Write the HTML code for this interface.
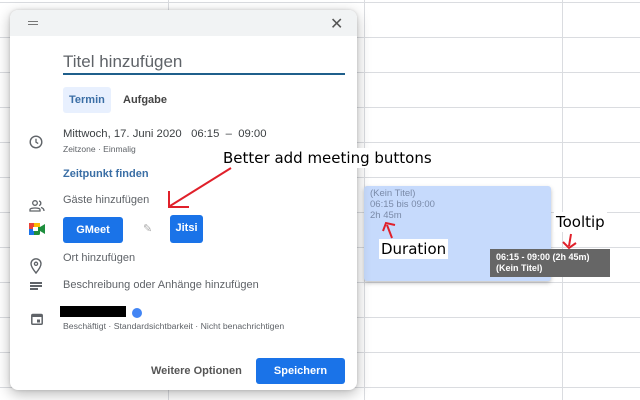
<!DOCTYPE html>
<html><head><meta charset="utf-8"><style>
*{margin:0;padding:0;box-sizing:border-box}
body{width:640px;height:400px;overflow:hidden;background:#fff;font-family:"Liberation Sans",Arial,sans-serif;position:relative}
.h{position:absolute;left:0;width:640px;height:1px;background:#dadce0}
.v{position:absolute;top:0;height:400px;width:1px;background:#dadce0}
.abs{position:absolute}
.dlg{position:absolute;left:10px;top:10px;width:347px;height:380px;background:#fff;border-radius:8px;box-shadow:0 4px 14px rgba(0,0,0,.28),0 0 3px rgba(0,0,0,.15);overflow:hidden}
.t{position:absolute;white-space:nowrap;color:#3c4043;font-size:11px}
.g{color:#5f6368}
.btn{position:absolute;background:#1a73e8;color:#fff;font-weight:bold;font-size:11px;border-radius:3px;text-align:center}
.ann{position:absolute;background:#fff;font-family:"DejaVu Sans",sans-serif;color:#000;white-space:nowrap}
</style></head><body>
<div class="h" style="top:2px"></div><div class="h" style="top:37px"></div><div class="h" style="top:72px"></div><div class="h" style="top:107px"></div><div class="h" style="top:142px"></div><div class="h" style="top:177px"></div><div class="h" style="top:212px"></div><div class="h" style="top:247px"></div><div class="h" style="top:282px"></div><div class="h" style="top:317px"></div><div class="h" style="top:352px"></div><div class="h" style="top:387px"></div>
<div class="v" style="left:168px"></div><div class="v" style="left:364px"></div><div class="v" style="left:562px"></div>

<div class="abs" style="left:364px;top:186px;width:187px;height:95px;background:#c6dafc;border-radius:3px;box-shadow:0 2px 4px rgba(0,0,0,.25)"></div>
<div class="t" style="left:370px;top:188px;font-size:9.5px;color:#7a8aa8;line-height:11px">(Kein Titel)<br>06:15 bis 09:00<br>2h 45m</div>
<div class="abs" style="left:490px;top:249px;width:120px;height:28px;background:#666;"></div>
<div class="t" style="left:496px;top:252px;font-size:9px;color:#fff;font-weight:bold;line-height:11px">06:15 - 09:00 (2h 45m)<br>(Kein Titel)</div>

<div class="dlg">
 <div class="abs" style="left:0;top:0;width:347px;height:26px;background:#f1f3f4"></div>
 <div class="abs" style="left:18px;top:11px;width:10px;height:1px;background:#777"></div>
 <div class="abs" style="left:18px;top:14px;width:10px;height:1px;background:#777"></div>
 <div class="t" style="left:320px;top:4px;font-size:16px;color:#555">✕</div>
 <div class="t" style="left:53px;top:42px;font-size:17px;color:#5f6368">Titel hinzufügen</div>
 <div class="abs" style="left:53px;top:63px;width:282px;height:2px;background:#1f5f8b"></div>
 <div class="abs" style="left:53px;top:77px;width:48px;height:26px;background:#e8f0fe;border-radius:3px"></div>
 <div class="t" style="left:59px;top:84px;font-weight:bold;font-size:11px;color:#3a6ea5">Termin</div>
 <div class="t" style="left:113px;top:84px;font-weight:bold;font-size:11px;color:#444">Aufgabe</div>
 <svg class="abs" style="left:19px;top:125px" width="14" height="14" viewBox="0 0 14 14"><circle cx="7" cy="7" r="5.8" fill="none" stroke="#5f6368" stroke-width="1.4"/><path d="M7 3.8V7.2L9.2 8.6" fill="none" stroke="#5f6368" stroke-width="1.3"/></svg>
 <div class="t" style="left:53px;top:118px;font-size:11.3px">Mittwoch, 17. Juni 2020 &nbsp;&nbsp;06:15 &nbsp;– &nbsp;09:00</div>
 <div class="t g" style="left:53px;top:134px;font-size:8.5px">Zeitzone · Einmalig</div>
 <div class="t" style="left:53px;top:158px;font-weight:bold;color:#3a6ea5">Zeitpunkt finden</div>
 <svg class="abs" style="left:19px;top:190px" width="16" height="12" viewBox="0 0 16 12"><circle cx="6" cy="3" r="2.3" fill="none" stroke="#5f6368" stroke-width="1.3"/><path d="M1 11V9.5C1 7.5 11 7.5 11 9.5V11Z M10 1a2.3 2.3 0 0 1 0 4.5 M12 7.5C14 8 15 9 15 11" fill="none" stroke="#5f6368" stroke-width="1.3"/></svg>
 <div class="t g" style="left:53px;top:184px">Gäste hinzufügen</div>
 <svg class="abs" style="left:19px;top:213px" width="16" height="12" viewBox="0 0 16 12"><rect x="0" y="0" width="11" height="12" rx="1.5" fill="#1e8e3e"/><rect x="0" y="0" width="5" height="6" fill="#ea4335"/><rect x="0" y="6" width="5" height="6" fill="#1a73e8"/><rect x="5" y="0" width="6" height="4" fill="#fbbc04"/><rect x="4" y="4" width="5" height="4" fill="#fff"/><path d="M11 4L16 1V11L11 8Z" fill="#1e8e3e"/></svg>
 <div class="btn" style="left:53px;top:207px;width:60px;height:26px;line-height:26px">GMeet</div>
 <div class="t" style="left:133px;top:212px;color:#aaa;font-size:11px">✎</div>
 <div class="btn" style="left:160px;top:205px;width:33px;height:28px;line-height:26px">Jitsi</div>
 <svg class="abs" style="left:20px;top:248px" width="12" height="16" viewBox="0 0 12 16"><path d="M6 15C6 15 1 9 1 5.8A5 5 0 0 1 11 5.8C11 9 6 15 6 15Z" fill="none" stroke="#5f6368" stroke-width="1.4"/><circle cx="6" cy="5.8" r="1.6" fill="none" stroke="#5f6368" stroke-width="1.3"/></svg>
 <div class="t g" style="left:53px;top:242px">Ort hinzufügen</div>
 <div class="abs" style="left:20px;top:272px;width:12px;height:1.5px;background:#5f6368"></div>
 <div class="abs" style="left:20px;top:275px;width:12px;height:1.5px;background:#5f6368"></div>
 <div class="abs" style="left:20px;top:278px;width:8px;height:1.5px;background:#5f6368"></div>
 <div class="t g" style="left:53px;top:269px">Beschreibung oder Anhänge hinzufügen</div>
 <svg class="abs" style="left:21px;top:303px" width="12" height="12" viewBox="0 0 12 12"><rect x="0.8" y="1.5" width="10.4" height="9.7" rx="1" fill="none" stroke="#5f6368" stroke-width="1.5"/><rect x="0.8" y="1.5" width="10.4" height="2.5" fill="#5f6368"/><rect x="6" y="6.5" width="3" height="3" fill="#5f6368"/></svg>
 <div class="abs" style="left:50px;top:296px;width:66px;height:11px;background:#000"></div>
 <div class="abs" style="left:122px;top:298px;width:10px;height:10px;border-radius:50%;background:#4285f4"></div>
 <div class="t g" style="left:53px;top:311px;font-size:8.7px">Beschäftigt · Standardsichtbarkeit · Nicht benachrichtigen</div>
 <div class="t" style="left:141px;top:355px;font-weight:bold;color:#555">Weitere Optionen</div>
 <div class="btn" style="left:246px;top:348px;width:89px;height:26px;line-height:26px">Speichern</div>
</div>

<div class="ann" style="left:220px;top:148px;font-size:15px;padding:1px 3px">Better add meeting buttons</div>
<div class="ann" style="left:379px;top:239px;font-size:15px;padding:1px 2px">Duration</div>
<div class="ann" style="left:554px;top:212px;font-size:15px;padding:1px 2px">Tooltip</div>
<svg class="abs" style="left:0;top:0" width="640" height="400">
 <g stroke="#e0202a" stroke-width="2" fill="none">
  <path d="M231 168L170 206M169 191V207H189"/>
  <path d="M392 238L387 225M383 231L386 223L395 225"/>
  <path d="M571 234L569 246M563 242L569 248L576 243"/>
 </g>
</svg>
</body></html>
